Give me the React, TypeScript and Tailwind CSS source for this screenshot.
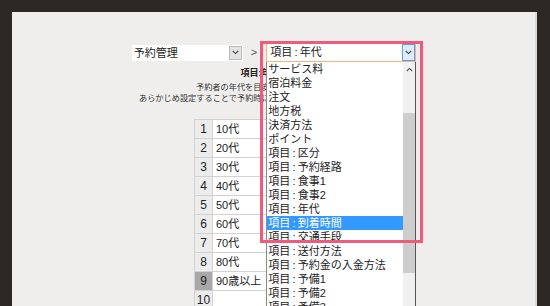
import React from 'react';

// Settings page: category select + item select with an open option list,
// highlighted by a pink annotation frame.

const c = '\u2009:\u2009';

const options = [
  'サービス料',
  '宿泊料金',
  '注文',
  '地方税',
  '決済方法',
  'ポイント',
  `項目${c}区分`,
  `項目${c}予約経路`,
  `項目${c}食事1`,
  `項目${c}食事2`,
  `項目${c}年代`,
  `項目${c}到着時間`,
  `項目${c}交通手段`,
  `項目${c}送付方法`,
  `項目${c}予約金の入金方法`,
  `項目${c}予備1`,
  `項目${c}予備2`,
  `項目${c}予備3`,
  `項目${c}予備4`,
];

const rows = ['10代', '20代', '30代', '40代', '50代', '60代', '70代', '80代', '90歳以上', ''];

const ChevronDown = () => (
  <svg width="7" height="5" viewBox="0 0 7 5" fill="none">
    <path d="M0.8 1 L3.5 3.6 L6.2 1" stroke="#444" strokeWidth="1.1" />
  </svg>
);

const ChevronUp = () => (
  <svg width="7" height="5" viewBox="0 0 7 5" fill="none">
    <path d="M0.8 4 L3.5 1.4 L6.2 4" stroke="#555" strokeWidth="1.1" />
  </svg>
);

const App: React.FC = () => {
  return (
    <div className="w-[550px] h-[306px] overflow-hidden bg-[#2c2826] pl-[12px] pr-[13px] pt-[12px] font-['Liberation_Sans','Noto_Sans_CJK_JP',sans-serif] text-[#222]">
      <div className="h-[300px] bg-[#efeeec] border-r-2 border-[#dadad8] flex flex-col items-center pt-[31px]">
        {/* select row */}
        <div className="flex items-center h-[19px] ml-[1px]">
          <div className="w-[111px] h-[16px] bg-white flex items-center justify-between">
            <span className="text-[11px] leading-[16px] pl-[2px]">予約管理</span>
            <span className="w-[13px] h-[14px] mr-[1px] bg-[#e3e3e3] border border-[#bdbdbd] flex items-center justify-center">
              <ChevronDown />
            </span>
          </div>
          <span className="ml-[8px] mr-[9px] text-[11px] text-[#555]">&gt;</span>
          <div className="relative w-[150px] h-[19px] bg-white border border-[#f4b385] flex items-center justify-between">
            <span className="text-[11px] leading-[17px] pl-[3px]">{`項目${c}年代`}</span>
            <span className="w-[13px] h-[17px] bg-[#dcecfc] border border-[#5a9fe2] flex items-center justify-center">
              <ChevronDown />
            </span>

            {/* open option list */}
            <div className="absolute left-[-1px] top-[18px] w-[150px] h-[260px] bg-white border-l border-r border-l-[#8a8a8a] border-r-[#555] flex z-10">
              <div className="flex-1 flex flex-col">
                {options.map((o, i) => (
                  <div
                    key={o}
                    className={`h-[14px] leading-[14px] text-[11px] pl-[1px] whitespace-nowrap ${
                      i === 11 ? 'bg-[#3399ff] text-white' : 'text-[#222]'
                    }`}
                  >
                    {o}
                  </div>
                ))}
              </div>
              <div className="w-[12px] bg-[#f0f0f0] flex flex-col items-center">
                <div className="h-[14px] flex items-center justify-center">
                  <ChevronUp />
                </div>
                <div className="w-full h-[160px] mt-[37px] bg-[#cdcdcd]" />
              </div>
            </div>

            {/* annotation frame */}
            <div className="absolute left-[-7px] top-[-3px] w-[163px] h-[202px] border-[3px] border-[#f05a7d] z-20 pointer-events-none" />
          </div>
        </div>

        {/* description */}
        <div className="mt-[6px] text-[9px] leading-[11px] font-bold">項目:年代の設定</div>
        <div className="mt-[3px] text-[8.2px] leading-[11px] text-[#333]">予約者の年代を目安に選択してください。</div>
        <div className="text-[8.2px] leading-[11px] text-[#333]">
          あらかじめ設定することで予約時にプルダウンから簡単に選択できます。
        </div>

        {/* table */}
        <table className="mt-[15px] border-collapse w-[159px]">
          <tbody>
            {rows.map((r, i) => (
              <tr key={i} className="h-[19px]">
                <td
                  className={`w-[18px] border border-[#d2d2d2] text-center text-[12px] leading-[18px] ${
                    i === 8 ? 'bg-[#a8a8a8]' : 'bg-[#ececec]'
                  }`}
                >
                  {i + 1}
                </td>
                <td className="border border-[#d2d2d2] bg-white text-[11px] leading-[18px] pl-[3px]">{r}</td>
              </tr>
            ))}
          </tbody>
        </table>
      </div>
    </div>
  );
};

export default App;
